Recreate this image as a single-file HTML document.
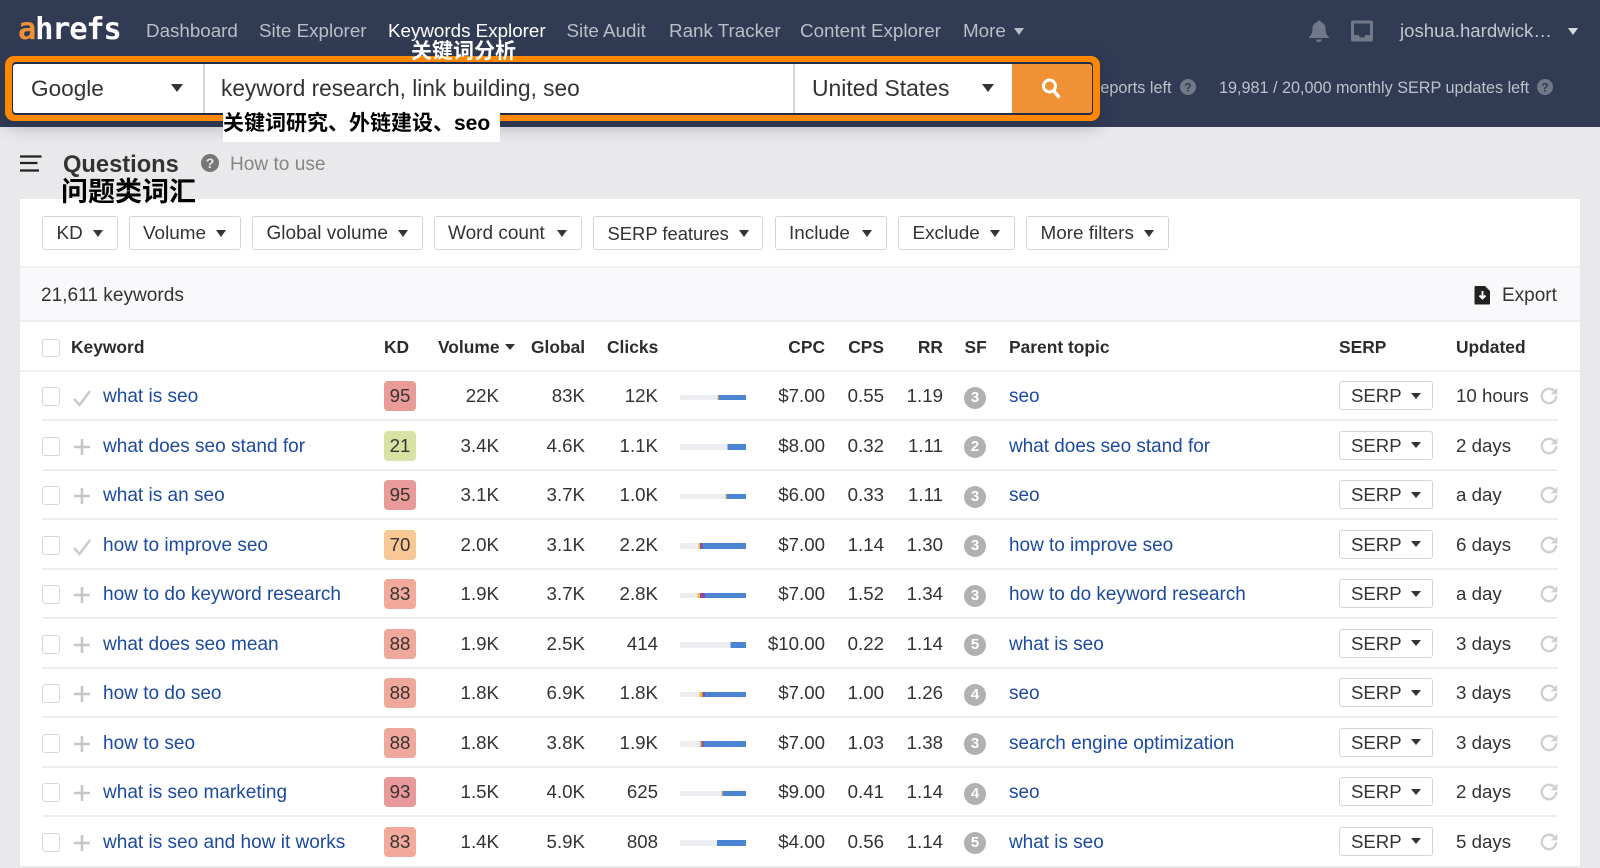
<!DOCTYPE html>
<html lang="en"><head><meta charset="utf-8"><title>Ahrefs Keywords Explorer</title>
<style>
*{box-sizing:border-box}
html,body{margin:0;padding:0}
body{width:1600px;height:866px;overflow:hidden;position:relative;background:#e9e9ec;font-family:"Liberation Sans","Noto Sans CJK SC",sans-serif;color:#333;font-size:19px}
.a{position:absolute;white-space:nowrap}
#hd{position:absolute;left:0;top:0;width:1600px;height:127px;background:#313b54}
.n{position:absolute;top:17px;line-height:28px;font-size:18.8px;color:#b9bec9;white-space:nowrap}
.s{position:absolute;top:75px;line-height:26px;font-size:16.2px;color:#bcc1cb;white-space:nowrap}
.car{position:absolute;width:0;height:0;border-left:5.5px solid transparent;border-right:5.5px solid transparent;border-top:7px solid #333}
#box{position:absolute;left:5px;top:56px;width:1095px;height:65px;border-radius:9px;background:#ff8800;box-shadow:0 6px 16px rgba(30,35,50,.28)}
#inner{position:absolute;left:12px;top:62px;width:1081px;height:53px;background:#1e2c49;border-radius:4px}
#wh{position:absolute;left:13px;top:64px;width:1079px;height:49px;background:#fff;border-radius:3px;overflow:hidden}
#card{position:absolute;left:20px;top:199px;width:1560px;height:667px;background:#fff}
#band{position:absolute;left:20px;top:266px;width:1560px;height:56px;background:#f9f9fb;border-top:2px solid #eff0f2;border-bottom:2px solid #eceded}
.f{position:absolute;top:215.5px;height:34px;line-height:33.5px;border:1.5px solid #d4d5d8;border-radius:3px;background:#fff;padding-left:13.5px;color:#333;font-size:18.9px}
.f .car{top:13px;right:14px}
.h{position:absolute;top:330px;line-height:34px;font-weight:bold;font-size:17.4px;color:#2c2c2c;white-space:nowrap}
.hr{position:absolute;left:20px;top:370px;width:1560px;height:2px;background:#f0f0f2}
.r{position:absolute;left:0;width:1600px;height:49.5px;line-height:50px;font-size:18.7px}
.r>span{position:absolute;top:0;white-space:nowrap}
.r::after{content:"";position:absolute;left:42px;top:48px;width:1516px;height:2px;background:#eeeef0}
.r:last-child::after{display:none}
.cb{position:absolute;left:42px;top:16px;width:18px;height:19px;border:1.5px solid #d6d6d8;border-radius:3px;background:#fff}
.hb{left:42px;top:339px;height:18px}
.ic{position:absolute;left:72px;top:16px;width:20px;height:20px}
.r>span.k{left:103px;top:1px;color:#1c4aa0;font-size:19.05px}
.d{position:absolute;left:384px;top:10px;width:32px;height:30px;border-radius:4px;line-height:30px;text-align:center;color:#3c3232;font-style:normal}
.vol{left:0;width:499px;text-align:right}
.gl{left:0;width:585px;text-align:right}
.cl{left:0;width:658px;text-align:right}
.bar{position:absolute;left:680px;top:23.5px;width:66px;height:5.5px}
.cpc{left:0;width:825px;text-align:right}
.cps{left:0;width:884px;text-align:right}
.rr{left:0;width:943px;text-align:right}
.sf{position:absolute;left:964px;top:15.5px;width:22px;height:22px;border-radius:50%;background:#b1b1b1;color:#fff;font-size:15px;font-weight:bold;text-align:center;line-height:22px;font-style:normal}
.r>span.p{left:1009px;top:1px;color:#1c4aa0;font-size:18.95px}
.sb{position:absolute;left:1339px;top:10px;width:94px;height:29px;border:1.5px solid #d4d5d8;border-radius:3px;background:#fff;line-height:27.5px;padding-left:11px;font-size:18.6px;color:#333;font-style:normal}
.sb .car{right:11px;top:10.5px;border-left-width:5px;border-right-width:5px;border-top-width:6.5px}
.u{left:1456px}
.re{position:absolute;left:1539px;top:15px;width:20px;height:20px}
</style></head><body>
<div id="hd"></div>
<div class="a" style="left:18px;top:9px;line-height:42px;font-weight:bold;color:#fff;font-family:'DejaVu Sans Mono','Liberation Mono',monospace;font-size:30.5px;letter-spacing:-1.3px"><span style="color:#ef9134">a</span>hrefs</div>
<div class="n" style="left:146px">Dashboard</div>
<div class="n" style="left:259px">Site Explorer</div>
<div class="n" style="left:388px;color:#fff">Keywords Explorer</div>
<div class="n" style="left:566.5px">Site Audit</div>
<div class="n" style="left:669px">Rank Tracker</div>
<div class="n" style="left:800px">Content Explorer</div>
<div class="n" style="left:963px">More</div>
<div class="car" style="left:1014px;top:28px;border-top-color:#b9bec9"></div>
<svg class="a" style="left:1307px;top:19px" width="24" height="24" viewBox="0 0 24 24"><path fill="#717889" d="M12 1.5c1.2 0 2 .8 2 1.8 3.2.9 4.6 3.5 4.6 6.7 0 3.6.8 6 3.2 7.6v1.4H2.2V17.600c2.400-1.600 3.200-4 3.200-7.600 0-3.200 1.400-5.800 4.600-6.700 0-1 .8-1.800 2-1.800zM9 20.500h6c0 1.500-1.400 2.500-3 2.500s-3-1-3-2.500z"/></svg>
<svg class="a" style="left:1350px;top:19px" width="24" height="24" viewBox="0 0 24 24"><path fill="#717889" fill-rule="evenodd" d="M3 1.500h18a2 2 0 0 1 2 2v17a2 2 0 0 1-2 2H3a2 2 0 0 1-2-2v-17a2 2 0 0 1 2-2zM4 4.500v11.500h4.500l1.500 2.500h4l1.500-2.500H20V4.500z"/></svg>
<div class="n" style="left:1400px;font-size:18.6px;color:#c2c6cf">joshua.hardwick…</div>
<div class="car" style="left:1568px;top:28px;border-top-color:#d5d8de"></div>
<div class="s" style="left:1101px;width:70.5px;overflow:hidden;text-align:right;direction:rtl">reports left</div>
<svg class="a" style="left:1180px;top:79px" width="16" height="16" viewBox="0 0 16 16"><circle cx="8" cy="8" r="8" fill="#717889"/><text x="8" y="12.500" text-anchor="middle" font-size="12" font-weight="bold" fill="#313b54" font-family="Liberation Sans">?</text></svg>
<div class="s" style="left:1219px">19,981 / 20,000 monthly SERP updates left</div>
<svg class="a" style="left:1537px;top:79px" width="16" height="16" viewBox="0 0 16 16"><circle cx="8" cy="8" r="8" fill="#717889"/><text x="8" y="12.500" text-anchor="middle" font-size="12" font-weight="bold" fill="#313b54" font-family="Liberation Sans">?</text></svg>

<div id="box"></div><div id="inner"></div>
<div id="wh">
  <div class="a" style="left:18px;top:1px;line-height:47px;font-size:22.6px;color:#333">Google</div>
  <div class="car" style="left:158px;top:20px;border-left-width:6px;border-right-width:6px;border-top-width:8px"></div>
  <div class="a" style="left:190px;top:0;width:1.500px;height:49px;background:#d6d6d6"></div>
  <div class="a" style="left:208px;top:1px;line-height:47px;font-size:22.65px;color:#333">keyword research, link building, seo</div>
  <div class="a" style="left:780px;top:0;width:1.500px;height:49px;background:#d6d6d6"></div>
  <div class="a" style="left:799px;top:1px;line-height:47px;font-size:22.9px;color:#333">United States</div>
  <div class="car" style="left:969px;top:20px;border-left-width:6px;border-right-width:6px;border-top-width:8px"></div>
  <div class="a" style="left:999px;top:0;width:80px;height:49px;background:#ef9134"></div>
  <svg class="a" style="left:1027px;top:13px" width="22" height="22" viewBox="0 0 22 22"><circle cx="9.500" cy="9" r="6" fill="none" stroke="#fff" stroke-width="3"/><path d="M13.500 13.500l5 6" stroke="#fff" stroke-width="3.400" stroke-linecap="round"/></svg>
</div>
<div class="a" style="left:411px;top:39px;line-height:26px;font-size:21px;font-weight:bold;color:#fff">关键词分析</div>
<div class="a" style="left:223px;top:112px;width:277px;height:30px;background:#fff;line-height:24.5px;padding-left:0;font-size:21px;font-weight:bold;color:#000">关键词研究、外链建设、seo</div>

<svg class="a" style="left:20px;top:154px" width="22" height="20" viewBox="0 0 22 20"><path d="M0 2.500h21.500M0 9h17.500M0 16.500h19" stroke="#222" stroke-width="2.300"/></svg>
<div class="a" style="left:63px;top:150px;line-height:30px;font-size:23.7px;font-weight:bold;color:#333">Questions</div>
<svg class="a" style="left:201px;top:154px" width="18" height="18" viewBox="0 0 18 18"><circle cx="9" cy="9" r="9" fill="#777"/><text x="9" y="14" text-anchor="middle" font-size="14" font-weight="bold" fill="#e9eaed" font-family="Liberation Sans">?</text></svg>
<div class="a" style="left:230px;top:151px;line-height:28px;font-size:19.1px;color:#858585">How to use</div>
<div class="a" style="left:61px;top:175px;line-height:34px;font-size:27px;font-weight:bold;color:#000;z-index:3">问题类词汇</div>

<div id="card"></div>
<div class="f" style="left:42px;width:75.500px">KD<i class="car"></i></div>
<div class="f" style="left:128.500px;width:112.500px">Volume<i class="car"></i></div>
<div class="f" style="left:252px;width:170.500px;font-size:19px">Global volume<i class="car"></i></div>
<div class="f" style="left:433.500px;width:148.500px;font-size:19px">Word count<i class="car"></i></div>
<div class="f" style="left:593px;width:170px;font-size:18.4px">SERP features<i class="car" style="right:13px"></i></div>
<div class="f" style="left:774.500px;width:112.500px">Include<i class="car"></i></div>
<div class="f" style="left:898px;width:117px">Exclude<i class="car"></i></div>
<div class="f" style="left:1026px;width:143px">More filters<i class="car"></i></div>
<div id="band"></div>
<div class="a" style="left:41px;top:282px;line-height:28px;font-size:19.1px;color:#333">21,611 keywords</div>
<svg class="a" style="left:1474px;top:285px" width="17" height="20" viewBox="0 0 17 20"><path fill="#222" d="M1.500 1h9.500l5 5v12.500a1 1 0 0 1-1 1H1.500a1 1 0 0 1-1-1V2a1 1 0 0 1 1-1z"/><path d="M8.500 6v7M5.500 10.500l3 3 3-3" fill="none" stroke="#fff" stroke-width="2"/></svg>
<div class="a" style="left:1502px;top:282px;line-height:28px;font-size:19px;color:#333">Export</div>

<div class="cb hb"></div>
<div class="h" style="left:71px">Keyword</div>
<div class="h" style="left:384px">KD</div>
<div class="h" style="left:438px">Volume</div>
<div class="car" style="left:504.500px;top:344px;border-left-width:5px;border-right-width:5px;border-top-width:6.500px"></div>
<div class="h" style="left:531px">Global</div>
<div class="h" style="left:607px">Clicks</div>
<div class="h" style="left:688px;width:137px;text-align:right">CPC</div>
<div class="h" style="left:748px;width:136px;text-align:right">CPS</div>
<div class="h" style="left:800px;width:143px;text-align:right">RR</div>
<div class="h" style="left:964.5px">SF</div>
<div class="h" style="left:1009px">Parent topic</div>
<div class="h" style="left:1339px">SERP</div>
<div class="h" style="left:1456px">Updated</div>
<div class="hr"></div>

<div class="r" style="top:371px"><i class="cb"></i><svg class="ic" viewBox="0 0 20 20"><path d="M2 12l5.500 6L18 4" fill="none" stroke="#c9c9c9" stroke-width="2.400"/></svg><span class="k">what is seo</span><i class="d" style="background:#e89b98">95</i><span class="vol">22K</span><span class="gl">83K</span><span class="cl">12K</span><i class="bar" style="background:linear-gradient(90deg,#ecedf0 37.300px,#f2c037 0 38.700px,#4a84d3 0)"></i><span class="cpc">$7.00</span><span class="cps">0.55</span><span class="rr">1.19</span><i class="sf">3</i><span class="p">seo</span><i class="sb">SERP<i class="car"></i></i><span class="u">10 hours</span><svg class="re" viewBox="0 0 18 18"><path d="M15.500 9a6.500 6.500 0 1 1-2-4.700" fill="none" stroke="#cfcfcf" stroke-width="2.200"/><path d="M16.500 1.500v6h-6z" fill="#cfcfcf"/></svg></div>

<div class="r" style="top:420.500px"><i class="cb"></i><svg class="ic" viewBox="0 0 20 20"><path d="M10 2v16M2 10h16" stroke="#c6c6c6" stroke-width="2.600"/></svg><span class="k">what does seo stand for</span><i class="d" style="background:#d6e3a4">21</i><span class="vol">3.4K</span><span class="gl">4.6K</span><span class="cl">1.1K</span><i class="bar" style="background:linear-gradient(90deg,#ecedf0 47.700px,#4a84d3 0)"></i><span class="cpc">$8.00</span><span class="cps">0.32</span><span class="rr">1.11</span><i class="sf">2</i><span class="p">what does seo stand for</span><i class="sb">SERP<i class="car"></i></i><span class="u">2 days</span><svg class="re" viewBox="0 0 18 18"><path d="M15.500 9a6.500 6.500 0 1 1-2-4.700" fill="none" stroke="#cfcfcf" stroke-width="2.200"/><path d="M16.500 1.500v6h-6z" fill="#cfcfcf"/></svg></div>

<div class="r" style="top:470px"><i class="cb"></i><svg class="ic" viewBox="0 0 20 20"><path d="M10 2v16M2 10h16" stroke="#c6c6c6" stroke-width="2.600"/></svg><span class="k">what is an seo</span><i class="d" style="background:#e89b98">95</i><span class="vol">3.1K</span><span class="gl">3.7K</span><span class="cl">1.0K</span><i class="bar" style="background:linear-gradient(90deg,#ecedf0 45.300px,#f2c037 0 46.700px,#4a84d3 0)"></i><span class="cpc">$6.00</span><span class="cps">0.33</span><span class="rr">1.11</span><i class="sf">3</i><span class="p">seo</span><i class="sb">SERP<i class="car"></i></i><span class="u">a day</span><svg class="re" viewBox="0 0 18 18"><path d="M15.500 9a6.500 6.500 0 1 1-2-4.700" fill="none" stroke="#cfcfcf" stroke-width="2.200"/><path d="M16.500 1.500v6h-6z" fill="#cfcfcf"/></svg></div>

<div class="r" style="top:519.500px"><i class="cb"></i><svg class="ic" viewBox="0 0 20 20"><path d="M2 12l5.500 6L18 4" fill="none" stroke="#c9c9c9" stroke-width="2.400"/></svg><span class="k">how to improve seo</span><i class="d" style="background:#f7c896">70</i><span class="vol">2.0K</span><span class="gl">3.1K</span><span class="cl">2.2K</span><i class="bar" style="background:linear-gradient(90deg,#ecedf0 18.300px,#f2c037 0 20px,#8e4aa3 0 22.300px,#4a84d3 0)"></i><span class="cpc">$7.00</span><span class="cps">1.14</span><span class="rr">1.30</span><i class="sf">3</i><span class="p">how to improve seo</span><i class="sb">SERP<i class="car"></i></i><span class="u">6 days</span><svg class="re" viewBox="0 0 18 18"><path d="M15.500 9a6.500 6.500 0 1 1-2-4.700" fill="none" stroke="#cfcfcf" stroke-width="2.200"/><path d="M16.500 1.500v6h-6z" fill="#cfcfcf"/></svg></div>

<div class="r" style="top:569px"><i class="cb"></i><svg class="ic" viewBox="0 0 20 20"><path d="M10 2v16M2 10h16" stroke="#c6c6c6" stroke-width="2.600"/></svg><span class="k">how to do keyword research</span><i class="d" style="background:#f2aa9c">83</i><span class="vol">1.9K</span><span class="gl">3.7K</span><span class="cl">2.8K</span><i class="bar" style="background:linear-gradient(90deg,#ecedf0 17.300px,#f2c037 0 20px,#8e4aa3 0 25px,#4a84d3 0)"></i><span class="cpc">$7.00</span><span class="cps">1.52</span><span class="rr">1.34</span><i class="sf">3</i><span class="p">how to do keyword research</span><i class="sb">SERP<i class="car"></i></i><span class="u">a day</span><svg class="re" viewBox="0 0 18 18"><path d="M15.500 9a6.500 6.500 0 1 1-2-4.700" fill="none" stroke="#cfcfcf" stroke-width="2.200"/><path d="M16.500 1.500v6h-6z" fill="#cfcfcf"/></svg></div>

<div class="r" style="top:618.500px"><i class="cb"></i><svg class="ic" viewBox="0 0 20 20"><path d="M10 2v16M2 10h16" stroke="#c6c6c6" stroke-width="2.600"/></svg><span class="k">what does seo mean</span><i class="d" style="background:#efa99c">88</i><span class="vol">1.9K</span><span class="gl">2.5K</span><span class="cl">414</span><i class="bar" style="background:linear-gradient(90deg,#ecedf0 50.300px,#4a84d3 0)"></i><span class="cpc">$10.00</span><span class="cps">0.22</span><span class="rr">1.14</span><i class="sf">5</i><span class="p">what is seo</span><i class="sb">SERP<i class="car"></i></i><span class="u">3 days</span><svg class="re" viewBox="0 0 18 18"><path d="M15.500 9a6.500 6.500 0 1 1-2-4.700" fill="none" stroke="#cfcfcf" stroke-width="2.200"/><path d="M16.500 1.500v6h-6z" fill="#cfcfcf"/></svg></div>

<div class="r" style="top:668px"><i class="cb"></i><svg class="ic" viewBox="0 0 20 20"><path d="M10 2v16M2 10h16" stroke="#c6c6c6" stroke-width="2.600"/></svg><span class="k">how to do seo</span><i class="d" style="background:#efa99c">88</i><span class="vol">1.8K</span><span class="gl">6.9K</span><span class="cl">1.8K</span><i class="bar" style="background:linear-gradient(90deg,#ecedf0 19.700px,#f2c037 0 22.300px,#8e4aa3 0 25px,#4a84d3 0)"></i><span class="cpc">$7.00</span><span class="cps">1.00</span><span class="rr">1.26</span><i class="sf">4</i><span class="p">seo</span><i class="sb">SERP<i class="car"></i></i><span class="u">3 days</span><svg class="re" viewBox="0 0 18 18"><path d="M15.500 9a6.500 6.500 0 1 1-2-4.700" fill="none" stroke="#cfcfcf" stroke-width="2.200"/><path d="M16.500 1.500v6h-6z" fill="#cfcfcf"/></svg></div>

<div class="r" style="top:717.500px"><i class="cb"></i><svg class="ic" viewBox="0 0 20 20"><path d="M10 2v16M2 10h16" stroke="#c6c6c6" stroke-width="2.600"/></svg><span class="k">how to seo</span><i class="d" style="background:#efa99c">88</i><span class="vol">1.8K</span><span class="gl">3.8K</span><span class="cl">1.9K</span><i class="bar" style="background:linear-gradient(90deg,#ecedf0 20px,#f2c037 0 21.300px,#8e4aa3 0 23.300px,#4a84d3 0)"></i><span class="cpc">$7.00</span><span class="cps">1.03</span><span class="rr">1.38</span><i class="sf">3</i><span class="p">search engine optimization</span><i class="sb">SERP<i class="car"></i></i><span class="u">3 days</span><svg class="re" viewBox="0 0 18 18"><path d="M15.500 9a6.500 6.500 0 1 1-2-4.700" fill="none" stroke="#cfcfcf" stroke-width="2.200"/><path d="M16.500 1.500v6h-6z" fill="#cfcfcf"/></svg></div>

<div class="r" style="top:767px"><i class="cb"></i><svg class="ic" viewBox="0 0 20 20"><path d="M10 2v16M2 10h16" stroke="#c6c6c6" stroke-width="2.600"/></svg><span class="k">what is seo marketing</span><i class="d" style="background:#e79a98">93</i><span class="vol">1.5K</span><span class="gl">4.0K</span><span class="cl">625</span><i class="bar" style="background:linear-gradient(90deg,#ecedf0 41.300px,#f2c037 0 42.700px,#4a84d3 0)"></i><span class="cpc">$9.00</span><span class="cps">0.41</span><span class="rr">1.14</span><i class="sf">4</i><span class="p">seo</span><i class="sb">SERP<i class="car"></i></i><span class="u">2 days</span><svg class="re" viewBox="0 0 18 18"><path d="M15.500 9a6.500 6.500 0 1 1-2-4.700" fill="none" stroke="#cfcfcf" stroke-width="2.200"/><path d="M16.500 1.500v6h-6z" fill="#cfcfcf"/></svg></div>

<div class="r" style="top:816.500px"><i class="cb"></i><svg class="ic" viewBox="0 0 20 20"><path d="M10 2v16M2 10h16" stroke="#c6c6c6" stroke-width="2.600"/></svg><span class="k">what is seo and how it works</span><i class="d" style="background:#f2aa9c">83</i><span class="vol">1.4K</span><span class="gl">5.9K</span><span class="cl">808</span><i class="bar" style="background:linear-gradient(90deg,#ecedf0 37px,#4a84d3 0)"></i><span class="cpc">$4.00</span><span class="cps">0.56</span><span class="rr">1.14</span><i class="sf">5</i><span class="p">what is seo</span><i class="sb">SERP<i class="car"></i></i><span class="u">5 days</span><svg class="re" viewBox="0 0 18 18"><path d="M15.500 9a6.500 6.500 0 1 1-2-4.700" fill="none" stroke="#cfcfcf" stroke-width="2.200"/><path d="M16.500 1.500v6h-6z" fill="#cfcfcf"/></svg></div>
</body></html>
